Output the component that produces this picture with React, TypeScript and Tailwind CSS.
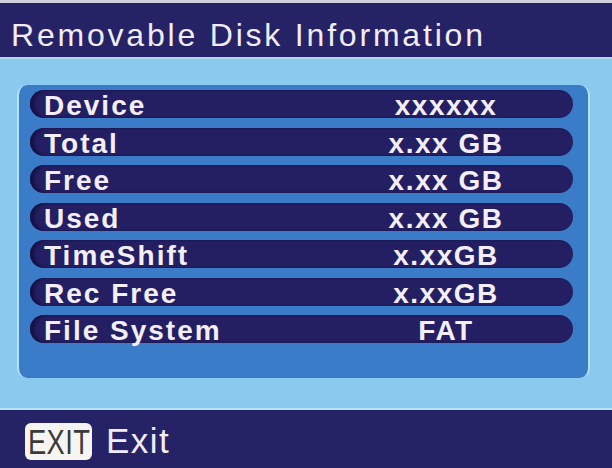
import React from "react";

const rows: [string, string][] = [
  ["Device", "xxxxxx"],
  ["Total", "x.xx GB"],
  ["Free", "x.xx GB"],
  ["Used", "x.xx GB"],
  ["TimeShift", "x.xxGB"],
  ["Rec Free", "x.xxGB"],
  ["File System", "FAT"],
];

export default function App() {
  return (
    <div
      className="w-[612px] h-[468px] flex flex-col overflow-hidden bg-[#262266]"
      style={{ fontFamily: '"Liberation Sans", Arial, sans-serif' }}
    >
      <div className="h-[3px] bg-[#cfd0dc]" />
      <div className="h-[56px] bg-[#262266] flex items-center pl-[11px] pt-[10px] border-b-[2px] border-[#a9d8f2]">
        <span className="text-[32px] leading-[40px] tracking-[2.8px] text-[#f1ecf6]">
          Removable Disk Information
        </span>
      </div>
      <div className="h-[351px] bg-[#8acaee] pt-[26px] pl-[17px] pr-[22px] border-b-[2px] border-[#b6e2f7]">
        <div className="h-[293px] rounded-[10px] bg-[#3a7cc8] border-l-[2px] border-r-[2px] border-[#b4e3fa] pt-[5px] pl-[11px] pr-[15px] flex flex-col gap-[9.5px]">
          {rows.map(([label, value]) => (
            <div
              key={label}
              className="h-[28px] shrink-0 rounded-full bg-[#241f62] flex items-start text-[#f3eef7] font-bold text-[28px] leading-[32px] shadow-[inset_4px_0_3px_rgba(10,8,50,0.6)]"
            >
              <span className="flex-1 pl-[14px] tracking-[2px] whitespace-nowrap">{label}</span>
              <span className="w-[226px] mr-[14px] text-center tracking-[1.5px] whitespace-nowrap">{value}</span>
            </div>
          ))}
        </div>
      </div>
      <div className="flex-1 bg-[#262266] flex items-center pl-[25px] gap-[14px] pt-[4px]">
        <div className="w-[67px] h-[37px] rounded-[6px] bg-[#f7f5f2] overflow-hidden flex items-center pl-[3px]">
          <span className="inline-block origin-left scale-x-[0.78] text-[35px] leading-[37px] text-[#3a3a38] tracking-[0.5px] whitespace-nowrap">
            EXIT
          </span>
        </div>
        <span className="text-[35px] leading-[40px] text-[#f1ecf6] tracking-[1.5px]">Exit</span>
      </div>
    </div>
  );
}
